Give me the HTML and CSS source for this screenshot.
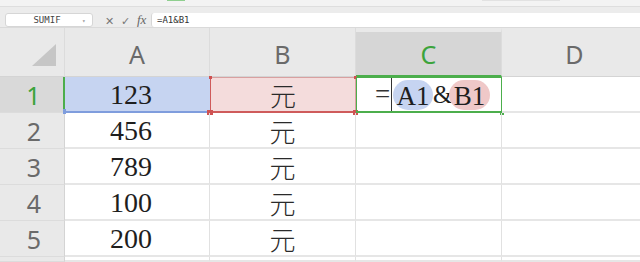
FILE: index.html
```html
<!DOCTYPE html>
<html lang="zh">
<head>
    <meta charset="UTF-8">
    <title>表格</title>
    <link rel="stylesheet" href="styles.css">
</head>
<body>
    <div class="topbar">
        <span class="tab-mark"></span>
        <span class="tab-pill"></span>
    </div>
    <div class="formula-bar">
        <div class="name-box">
            <span class="name">SUMIF</span>
            <span class="drop">▾</span>
        </div>
        <div class="fx-icons">
            <span class="ico">✕</span>
            <span class="ico">✓</span>
            <span class="fx">fx</span>
        </div>
        <div class="formula-input">=A1&amp;B1</div>
    </div>
    <div class="sheet">
        <div class="corner">
            <svg width="24" height="22" viewBox="0 0 24 22"><polygon points="24,0 24,22 0,22" fill="#c6c6c6"/></svg>
        </div>
        <div class="col-head">A</div>
        <div class="col-head">B</div>
        <div class="col-head active">C</div>
        <div class="col-head">D</div>

        <div class="row-head active">1</div>
        <div class="cell num ref-a">123<i class="h bl"></i><i class="h br"></i></div>
        <div class="cell cjk ref-b">元<i class="h tl"></i><i class="h tr"></i><i class="h bl"></i><i class="h br"></i></div>
        <div class="cell editing">
            <span class="eq">=</span><span class="caret"></span><span class="pill pa">A1</span><span class="amp">&amp;</span><span class="pill pb">B1</span>
            <i class="h gbr"></i>
        </div>
        <div class="cell"></div>

        <div class="row-head">2</div>
        <div class="cell num">456</div>
        <div class="cell cjk">元</div>
        <div class="cell"></div>
        <div class="cell"></div>

        <div class="row-head">3</div>
        <div class="cell num">789</div>
        <div class="cell cjk">元</div>
        <div class="cell"></div>
        <div class="cell"></div>

        <div class="row-head">4</div>
        <div class="cell num">100</div>
        <div class="cell cjk">元</div>
        <div class="cell"></div>
        <div class="cell"></div>

        <div class="row-head">5</div>
        <div class="cell num">200</div>
        <div class="cell cjk">元</div>
        <div class="cell"></div>
        <div class="cell"></div>

        <div class="row-head"></div>
        <div class="cell"></div>
        <div class="cell"></div>
        <div class="cell"></div>
        <div class="cell"></div>
    </div>
</body>
</html>
```

FILE: styles.css
```css
* {
    box-sizing: border-box;
}
body {
    margin: 0;
    width: 640px;
    height: 262px;
    overflow: hidden;
    background-color: #ffffff;
    font-family: "Noto Sans", "Liberation Sans", sans-serif;
}
.topbar {
    height: 7px;
    background-color: #f3f3f3;
    border-bottom: 1px solid #dedede;
    position: relative;
}
.tab-mark {
    position: absolute;
    left: 167px;
    top: 0;
    width: 18px;
    height: 1px;
    background-color: #8fcf8f;
}
.tab-pill {
    position: absolute;
    left: 482px;
    top: 0;
    width: 78px;
    height: 1px;
    background-color: #e2e2e2;
}
.formula-bar {
    height: 21px;
    background-color: #ececec;
    border-bottom: 1px solid #dadada;
    display: flex;
    align-items: flex-start;
    padding-top: 6px;
}
.name-box {
    margin-left: 5px;
    width: 88px;
    height: 14px;
    background-color: #ffffff;
    border: 1px solid #d6d6d6;
    border-radius: 3px;
    display: flex;
    align-items: center;
    font-family: "DejaVu Sans Mono", "Liberation Mono", monospace;
    font-size: 9px;
    color: #444;
}
.name {
    flex: 1;
    text-align: center;
    padding-left: 6px;
}
.drop {
    width: 10px;
    font-size: 6px;
    color: #999;
}
.fx-icons {
    width: 58px;
    display: flex;
    align-items: center;
    height: 14px;
    padding-left: 12px;
    gap: 7px;
    color: #777;
    font-size: 11px;
}
.fx-icons .ico {
    width: 9px;
    text-align: center;
}
.fx {
    font-family: "Liberation Serif", serif;
    font-style: italic;
    font-size: 13px;
    color: #666;
}
.formula-input {
    flex: 1;
    height: 14px;
    background-color: #ffffff;
    border-left: 1px solid #d6d6d6;
    border-radius: 3px 0 0 3px;
    font-family: "DejaVu Sans Mono", "Liberation Mono", monospace;
    font-size: 9px;
    line-height: 14px;
    padding-left: 5px;
    color: #333;
}
.sheet {
    display: grid;
    grid-template-columns: 65px 145px 146px 146px 146px;
    grid-template-rows: 49px repeat(5, 36px) 5px;
}
.corner {
    background-color: #e9e9e9;
    border-right: 1px solid #dcdcdc;
    border-bottom: 1px solid #d4d4d4;
    padding: 16px 0 0 32px;
}
.corner svg {
    display: block;
}
.col-head {
    background-color: #e9e9e9;
    border-right: 1px solid #dcdcdc;
    border-bottom: 1px solid #d4d4d4;
    display: flex;
    align-items: center;
    justify-content: center;
    font-size: 25px;
    color: #6a6a6a;
    padding-top: 4px;
}
.col-head.active {
    background-color: #d6d6d6;
    border-top: 4px solid #e9e9e9;
    border-bottom: 2px solid #4cae4c;
    color: #3ca43c;
    padding-top: 1px;
}
.row-head {
    background-color: #e9e9e9;
    border-right: 1px solid #d4d4d4;
    border-bottom: 1px solid #dcdcdc;
    display: flex;
    align-items: center;
    justify-content: center;
    font-size: 25px;
    color: #6a6a6a;
    padding-left: 4px;
}
.row-head.active {
    background-color: #d9d9d9;
    border-right: 2px solid #4cae4c;
    color: #3ca43c;
}
.cell {
    position: relative;
    border-right: 1px solid #e1e1e1;
    border-bottom: 2px solid #e6e6e6;
    display: flex;
    align-items: center;
    justify-content: center;
    color: #1e1e1e;
}
.num {
    font-family: "Liberation Serif", serif;
    font-size: 28px;
    padding-top: 2px;
    padding-right: 12px;
}
.cjk {
    font-family: "Noto Sans CJK SC", sans-serif;
    font-weight: 300;
    font-size: 26px;
    color: #2a2a2a;
}
.ref-a {
    background-color: #c6d4f1;
    border-bottom: 2px solid #7f9ddd;
    border-right: 1px solid #c6d4f1;
}
.ref-b {
    background-color: #f4dcdc;
    border: 1px solid #d8a0a0;
    border-bottom: 2px solid #cf5b5b;
    border-left: 1px solid #cf5b5b;
}
.h {
    position: absolute;
    width: 5px;
    height: 5px;
    background-color: #cf5252;
}
.ref-a .h {
    background-color: #7f9ddd;
}
.ref-a .bl {
    left: -2px;
    bottom: -3px;
    width: 3px;
}
.ref-a .br {
    right: -3px;
    bottom: -4px;
    background-color: #cf5252;
}
.tl { left: -2px; top: -2px; width: 3px; height: 3px; }
.tr { right: -2px; top: -2px; width: 3px; height: 3px; }
.ref-b .bl { left: -3px; bottom: -4px; }
.ref-b .br { right: -3px; bottom: -4px; }
.editing {
    border: 1px solid #4cae4c;
    border-bottom: 2px solid #4cae4c;
    justify-content: flex-start;
    padding-left: 18px;
    font-family: "Liberation Serif", serif;
    font-size: 27px;
}
.editing .gbr {
    right: -3px;
    bottom: -4px;
    width: 4px;
    height: 4px;
    background-color: #4cae4c;
}
.eq {
    width: 15px;
    color: #333;
}
.caret {
    width: 1px;
    height: 33px;
    background-color: #333;
    margin-left: 1px;
    margin-right: 1px;
}
.pill {
    height: 30px;
    line-height: 32px;
    border-radius: 15px;
    width: 40px;
    text-align: center;
}
.pa {
    background-color: #c6d4f1;
}
.pb {
    background-color: #efc8c8;
    width: 41px;
}
.amp {
    width: 16px;
    font-size: 25px;
    text-align: center;
}
```
